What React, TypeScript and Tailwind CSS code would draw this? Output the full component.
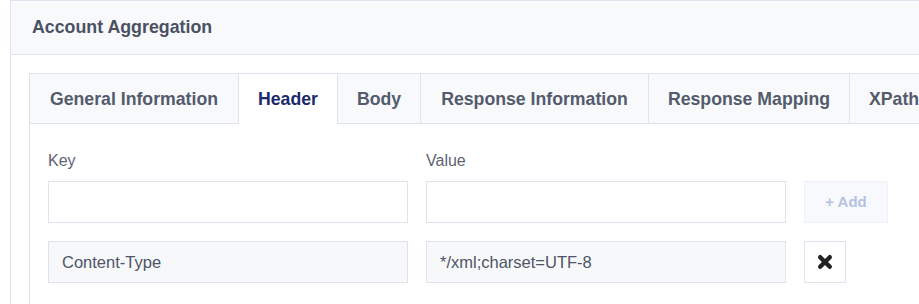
import React from 'react'

const tabs = [
  { label: 'General Information', w: 'w-[209px] justify-center' },
  { label: 'Header', w: 'w-[99px] justify-center', active: true },
  { label: 'Body', w: 'w-[83px] justify-center' },
  { label: 'Response Information', w: 'w-[228px] justify-center' },
  { label: 'Response Mapping', w: 'w-[201px] justify-center' },
  { label: 'XPath', w: 'px-[19px]' },
]

const CloseIcon = () => (
  <svg width="16" height="16" viewBox="0 0 16 16" fill="none">
    <path
      d="M3.2 3.2 L12.8 12.8 M12.8 3.2 L3.2 12.8"
      stroke="#222"
      strokeWidth="4.4"
      strokeLinecap="round"
    />
  </svg>
)

const App = () => {
  return (
    <div className="h-[304px] w-[919px] overflow-hidden bg-white font-['Liberation_Sans',Arial,sans-serif]">
      <div className="ml-[10px] w-[1000px] border border-b-0 border-[#dfe3ee]">
        <div className="flex h-[54px] items-center border-b border-[#dfe3ee] bg-[#f8f9fb] px-[21px] text-[17.8px] font-bold text-[#4a5162]">
          Account Aggregation
        </div>

        <div className="px-[18px] pt-[18px]">
          <div className="h-[300px] border border-[#dfe3ee]">
            <div className="flex h-[50px] border-b border-[#dfe3ee] bg-[#f8f9fb]">
              {tabs.map((t) => (
                <div
                  key={t.label}
                  className={`flex h-[50px] shrink-0 items-center whitespace-nowrap border-r border-[#dfe3ee] text-[17.7px] font-bold ${t.w} ${
                    t.active ? 'bg-white text-[#1b2a6b]' : 'text-[#535b6c]'
                  }`}
                >
                  {t.label}
                </div>
              ))}
            </div>

            <div className="px-[18px] pt-[25px]">
              <div className="grid grid-cols-[360px_360px_84px] gap-x-[18px]">
                <div className="text-[16px] leading-6 text-[#5c6372]">Key</div>
                <div className="text-[16px] leading-6 text-[#5c6372]">Value</div>
                <div />

                <input
                  className="mt-[8px] h-[42px] border border-[#dfe3ee] bg-white px-[13px] text-[16.5px] text-[#4d5566] outline-none"
                  defaultValue=""
                />
                <input
                  className="mt-[8px] h-[42px] border border-[#dfe3ee] bg-white px-[13px] text-[16.5px] text-[#4d5566] outline-none"
                  defaultValue=""
                />
                <button className="mt-[8px] h-[42px] border border-[#eef1f8] bg-[#f7f9fd] text-[15px] font-bold text-[#b5c3e0]">
                  + Add
                </button>

                <input
                  className="mt-[18px] h-[42px] border border-[#dfe3ee] bg-[#f7f8fa] px-[13px] text-[16.5px] text-[#4d5566] outline-none"
                  defaultValue="Content-Type"
                  readOnly
                />
                <input
                  className="mt-[18px] h-[42px] border border-[#dfe3ee] bg-[#f7f8fa] px-[13px] text-[16.5px] text-[#4d5566] outline-none"
                  defaultValue="*/xml;charset=UTF-8"
                  readOnly
                />
                <div className="mt-[18px]">
                  <button className="flex h-[42px] w-[42px] items-center justify-center border border-[#dfe3ee] bg-white">
                    <CloseIcon />
                  </button>
                </div>
              </div>
            </div>
          </div>
        </div>
      </div>
    </div>
  )
}

export default App
